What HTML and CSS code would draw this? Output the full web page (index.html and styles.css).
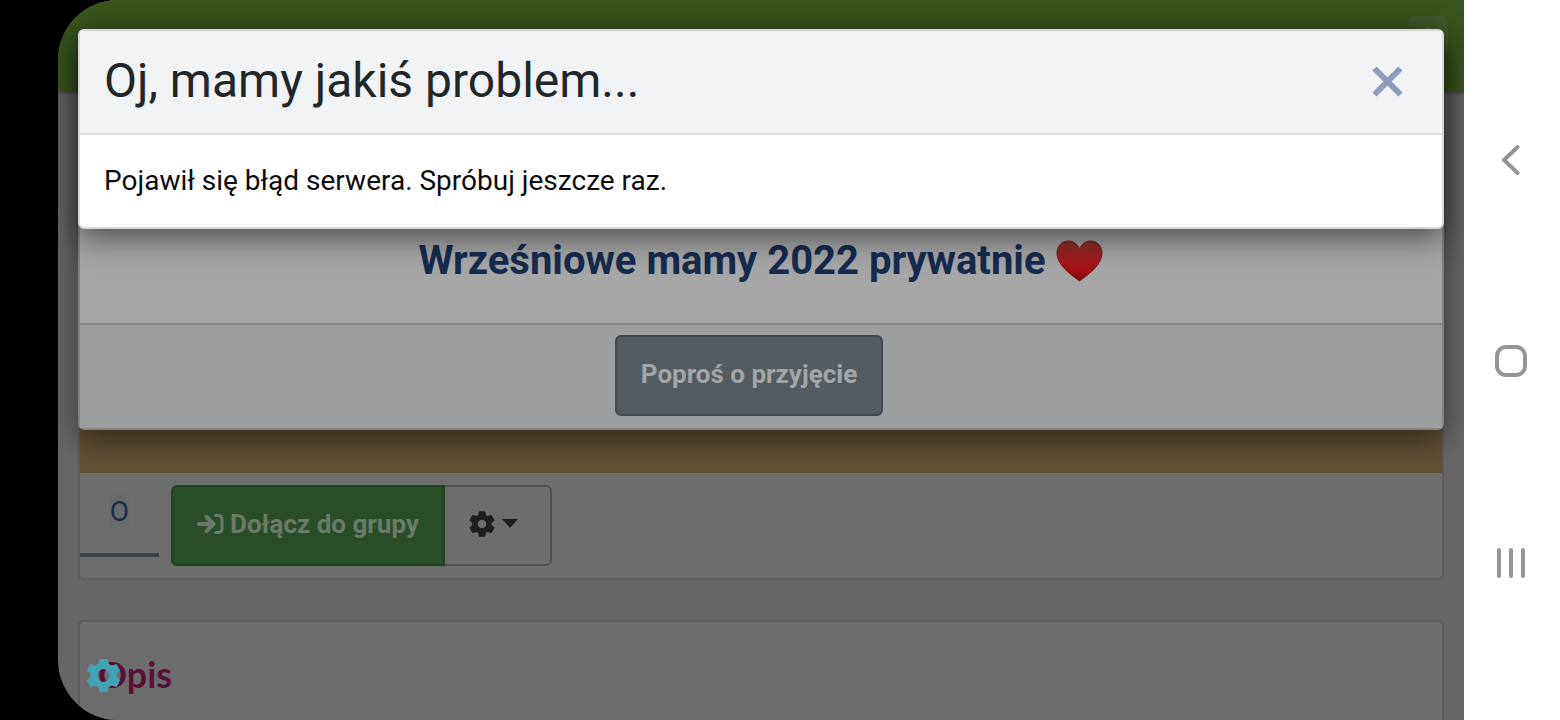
FILE: index.html
```
<!DOCTYPE html>
<html lang="pl">
<head>
<meta charset="utf-8">
<meta name="viewport" content="width=device-width, initial-scale=1">
<title>Wrześniowe mamy 2022 prywatnie</title>
<link rel="stylesheet" href="styles.css">
</head>
<body>
<svg class="defs" aria-hidden="true">
  <symbol id="cog" viewBox="0 0 26 26"><path fill-rule="evenodd" stroke="currentColor" stroke-width="1.500" stroke-linejoin="round" d="M10.500 1h5l.8 3.600 2.400 1.400 3.500-1.200 2.500 4.300-2.700 2.500v2.800l2.700 2.500-2.500 4.300-3.500-1.200-2.400 1.400-.8 3.600h-5l-.8-3.600-2.400-1.400-3.500 1.200-2.500-4.300L4 14.400v-2.800L1.300 9.100l2.500-4.300L7.300 6l2.400-1.400zM13 8a5 5 0 1 0 0 10 5 5 0 0 0 0-10z"/></symbol>
</svg>
<div class="screen">
  <header class="topbar"><button class="topbar-menu" type="button" aria-label="Menu"><svg width="20" height="20" viewBox="0 0 20 20"><path d="M10 2v16M3 9l7-7 7 7" fill="none" stroke="currentColor" stroke-width="2"/></svg></button></header>
  <main class="page">
    <section class="card">
      <div class="cover"></div>
      <div class="actions">
        <a class="tab" href="#"><span class="tab-label">O</span></a>
        <div class="btn-group">
          <button class="btn btn-join" type="button"><svg class="icon-join" viewBox="0 0 27 22" aria-hidden="true"><path d="M2 11h14M9.500 4l7 7-7 7" fill="none" stroke="currentColor" stroke-width="4" stroke-linecap="round" stroke-linejoin="round"/><path d="M12 6l5 5-5 5z" fill="currentColor"/><path d="M18.500 2.500h3a3.500 3.500 0 0 1 3.500 3.500v10a3.500 3.500 0 0 1-3.500 3.500h-3" fill="none" stroke="currentColor" stroke-width="3" stroke-linecap="round"/></svg>Dołącz do grupy</button>
          <button class="btn btn-settings" type="button" aria-label="Ustawienia"><svg class="icon-cog" aria-hidden="true"><use href="#cog"/></svg><span class="caret"></span></button>
        </div>
      </div>
    </section>
    <section class="card about">
      <h2 class="about-title">Opis</h2>
      <button class="floating-cog" type="button" aria-label="Ustawienia prywatności"><svg viewBox="0 0 33 33" aria-hidden="true"><path fill="currentColor" fill-rule="evenodd" d="M12.500 0h8l1 4.500 3 2 5-1.500 3.500 6.500-3.500 3.500v3l3.500 3.500-3.500 6.500-5-1.500-3 2-1 4.500h-8l-1-4.500-3-2-5 1.500L0 21.500 3.500 18v-3L0 11.500 3.500 5l5 1.500 3-2zM16.500 10c-3.200 0-5.500 2.900-5.500 6.500s2.300 6.500 5.500 6.500 5.500-2.900 5.500-6.500S19.700 10 16.500 10z"/></svg></button>
    </section>
  </main>
  <div class="modal modal-group">
    <div class="group-body">
      <h2 class="group-title">Wrześniowe mamy 2022 prywatnie
        <svg class="heart" viewBox="0 0 48 44" role="img" aria-label="serce"><defs><linearGradient id="hg" x1="0" y1="0" x2="0" y2="1"><stop offset="0" stop-color="#8a3430"/><stop offset=".4" stop-color="#a01c1e"/><stop offset=".75" stop-color="#a60f14"/><stop offset="1" stop-color="#740b0b"/></linearGradient></defs><path d="M23.500 42C14 35 1 26 1 14 1 7 6 2 12.500 2c5 0 9 3 11 8 2-5 6-8 11-8C41 2 46 7 46 14c0 12-13 21-22.500 28z" fill="url(#hg)" stroke="#78201d"/></svg></h2>
    </div>
    <div class="group-footer"><button class="btn btn-request" type="button">Poproś o przyjęcie</button></div>
  </div>
  <div class="modal modal-error" role="dialog" aria-labelledby="error-title">
    <div class="error-header">
      <h1 class="error-title" id="error-title">Oj, mamy jakiś problem...</h1>
      <button class="close" type="button" aria-label="Zamknij"><svg viewBox="0 0 32 32" aria-hidden="true"><path d="M3.500 3.500l26 26M29.500 3.500l-26 26" stroke="currentColor" stroke-width="6"/></svg></button>
    </div>
    <p class="error-text">Pojawił się błąd serwera. Spróbuj jeszcze raz.</p>
  </div>
</div>
<nav class="sysnav">
  <button type="button" aria-label="Wstecz"><svg viewBox="0 0 32 32"><path d="M22.500 4L9 17l13.500 13" stroke-width="4"/></svg></button>
  <button type="button" aria-label="Ekran główny"><svg viewBox="0 0 32 32"><rect x="2" y="2" width="28" height="28" rx="9" stroke-width="4"/></svg></button>
  <button type="button" aria-label="Ostatnie"><svg viewBox="0 0 32 32"><path d="M4 3v26M16 3v26M28 3v26" stroke-width="4"/></svg></button>
</nav>
</body>
</html>
```
FILE: styles.css
```
* { box-sizing: border-box; }
body {
  margin: 0;
  min-height: 100vh;
  display: flex;
  padding-left: 58px;
  background: #000;
  font-family: Roboto, "Liberation Sans", sans-serif;
}
h1, h2, p { margin: 0; }
button { padding: 0; border: 0; background: none; font: inherit; }
svg { display: block; }
.defs { position: absolute; width: 0; height: 0; }

.screen {
  position: relative;
  flex: 1;
  height: 100vh;
  overflow: hidden;
  border-radius: 60px 0 0 60px;
  background: #666;
}
.topbar {
  display: flex;
  justify-content: flex-end;
  height: 92px;
  padding: 16px;
  background: #3b561d;
  box-shadow: 0 1px 3px #444;
}
.topbar-menu {
  display: flex;
  justify-content: center;
  width: 40px;
  height: 40px;
  padding-top: 10px;
  border-radius: 8px;
  background: #425a2b;
  color: #56683f;
}
.page { display: grid; gap: 40px; padding: 20px; }
.card {
  border: 2px solid #5c5c5c;
  border-radius: 6px;
  background: #6d6d6d;
}
.cover { height: 359px; background: #615234; }
.actions { display: flex; gap: 12px; padding-bottom: 12px; }
.tab {
  display: flex;
  justify-content: center;
  align-items: flex-start;
  width: 79px;
  height: 84px;
  padding-top: 22px;
  border-bottom: 4px solid #3c4249;
  color: #1b2c4d;
  font-size: 28px;
  line-height: 33px;
  text-decoration: none;
}
.tab-label { background: #676b6c; }
.btn-group { display: flex; padding-top: 12px; }
.btn {
  display: flex;
  align-items: center;
  height: 81px;
  padding: 0 24px 4px;
  border: 2px solid;
  border-radius: 6px;
  font-size: 26px;
  font-weight: 700;
}
.btn-join {
  gap: 6px;
  border-color: #21431f;
  border-radius: 6px 0 0 6px;
  background: #294f28;
  color: #6c7a6b;
}
.icon-join { width: 27px; height: 22px; }
.btn-settings {
  gap: 7px;
  padding-right: 32px;
  border-color: #505050;
  border-left: 0;
  border-radius: 0 6px 6px 0;
  color: #1e1e1e;
}
.icon-cog { width: 26px; height: 26px; fill: currentColor; }
.caret {
  border: 8px solid transparent;
  border-top: 9px solid;
  border-bottom: 0;
}
.about { position: relative; height: 180px; padding: 28px 18px; }
.about-title {
  color: #5c1038;
  font: 700 36px/48px Lato, sans-serif;
}
.floating-cog {
  position: absolute;
  top: 37px;
  left: 7px;
  color: #40a5b2;
}
.floating-cog svg { width: 33px; height: 33px; }

.modal {
  position: absolute;
  top: 29px;
  left: 20px;
  right: 20px;
  border: 2px solid;
  border-radius: 6px;
  box-shadow: 0 10px 30px rgba(0, 0, 0, .5);
}
.modal-group { border-color: #838381; background: #a6a6a6; }
.group-body { padding: 205px 24px 37px; }
.group-title {
  display: flex;
  justify-content: center;
  align-items: center;
  gap: 10px;
  color: #172b4d;
  font-size: 40px;
  line-height: 50px;
}
.heart { width: 48px; height: 44px; }
.group-footer {
  display: flex;
  justify-content: center;
  padding: 10px 24px 12px 0;
  border-top: 2px solid #858585;
  background: #9d9f9e;
}
.btn-request { border-color: #43494e; background: #545b61; color: #a3a5a6; }
.modal-error { border-color: #d6d7d6; background: #fff; }
.error-header {
  display: flex;
  justify-content: space-between;
  align-items: center;
  padding: 19px 39px 21px 24px;
  border-bottom: 2px solid #dedfe0;
  background: #f1f3f5;
}
.error-title {
  color: #212729;
  font-size: 48px;
  font-weight: 400;
  line-height: 62px;
}
.close { color: #8c9bba; }
.close svg { width: 32px; height: 32px; }
.error-text {
  padding: 26px 24px;
  color: #0b0b0b;
  font-size: 28px;
  line-height: 40px;
}

.sysnav {
  display: flex;
  flex-direction: column;
  justify-content: center;
  align-items: center;
  gap: 160px;
  width: 96px;
  height: 100vh;
  padding: 2px 2px 0 0;
  background: #fff;
}
.sysnav button { padding: 5px; }
.sysnav svg {
  width: 32px;
  height: 32px;
  fill: none;
  stroke: #959595;
  stroke-linecap: round;
}
```
